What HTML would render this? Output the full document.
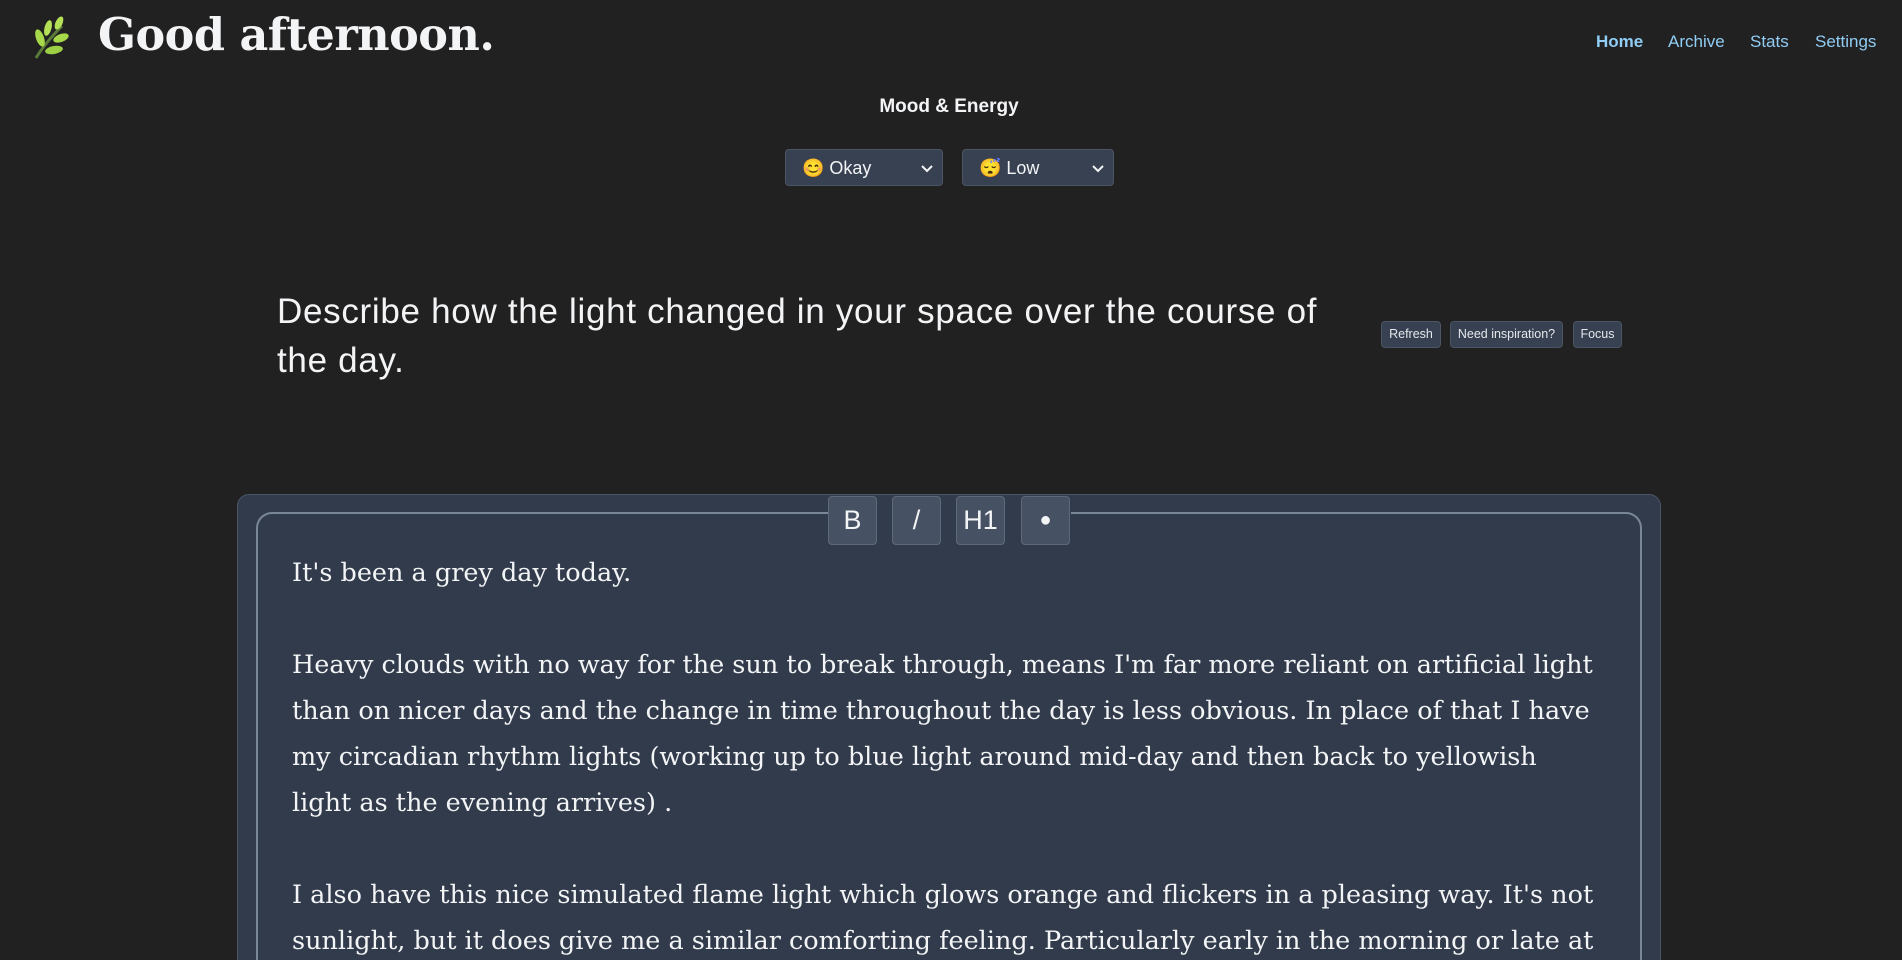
<!DOCTYPE html>
<html><head><meta charset="utf-8"><style>
*{margin:0;padding:0;box-sizing:border-box}
html,body{width:1902px;height:960px;overflow:hidden;background:#212121;color:#f3f4f6;font-family:"Liberation Sans",sans-serif}
#wrap{position:relative;width:1902px;height:960px;overflow:hidden}
.abs{position:absolute}
.title{left:98px;top:9px;font-family:"DejaVu Serif","Liberation Serif",serif;font-weight:bold;font-size:44.5px;color:#f3f4f6;letter-spacing:-0.5px}
.nav{top:32px;font-size:17px;color:#90cdf4}
.sel{top:149px;height:37px;background:#374151;border:1px solid #4b5563;border-radius:4px;font-size:18px;color:#f3f4f6;padding:8px 0 0 16px}
.sel svg{position:absolute;right:8px;top:14px}
.btn{top:321px;height:27px;background:#374151;border:1px solid #4b5563;border-radius:4px;font-size:12.5px;color:#e5e7eb;text-align:center;line-height:25px}
.prompt{left:277px;top:287px;font-size:35px;letter-spacing:0.7px;line-height:49px;color:#f3f4f6}
.outer{left:237px;top:494px;width:1424px;height:466px;background:#313b4b;border:1px solid #4a5566;border-bottom:none;border-radius:12px 12px 0 0}
.inner{left:256px;top:512px;width:1386px;height:448px;border:2px solid #7a8799;border-bottom:none;border-radius:16px 16px 0 0}
.tb{top:496px;width:49px;height:49px;background:#465163;border:1px solid #5d6878;border-radius:4px;font-size:27px;color:#f3f4f6;text-align:center;line-height:47px}
.txt{left:292px;top:550px;height:410px;overflow:hidden;font-family:"DejaVu Serif","Liberation Serif",serif;font-size:25.5px;line-height:46px;color:#f3f4f6;white-space:nowrap}
</style></head><body><div id="wrap">
<svg class="abs" style="left:28px;top:14px" width="46" height="48" viewBox="0 0 46 48">
<path d="M8 44 C14 34 22 24 34 12" stroke="#5a7a3a" stroke-width="3" fill="none"/>
<ellipse cx="12" cy="24" rx="4" ry="9" fill="#a6d84a" transform="rotate(-20 12 24)"/>
<ellipse cx="20" cy="14" rx="3.5" ry="8" fill="#b4e058" transform="rotate(15 20 14)"/>
<ellipse cx="31" cy="9" rx="3.5" ry="7" fill="#b4e058" transform="rotate(25 31 9)"/>
<ellipse cx="33" cy="24" rx="4" ry="8" fill="#a6d84a" transform="rotate(70 33 24)"/>
<ellipse cx="26" cy="36" rx="4" ry="9" fill="#9ccf44" transform="rotate(80 26 36)"/>
</svg>
<div class="abs title">Good afternoon.</div>
<div class="abs nav" style="left:1596px;font-weight:bold">Home</div>
<div class="abs nav" style="left:1668px">Archive</div>
<div class="abs nav" style="left:1750px">Stats</div>
<div class="abs nav" style="left:1815px">Settings</div>
<div class="abs" style="left:0;width:1898px;text-align:center;top:96px;font-size:19px;font-weight:bold">Mood &amp; Energy</div>
<div class="abs sel" style="left:785px;width:158px">😊 Okay<svg width="14" height="10"><path d="M2 2l5 5 5-5" stroke="#f3f4f6" stroke-width="2" fill="none"/></svg></div>
<div class="abs sel" style="left:962px;width:152px">😴 Low<svg width="14" height="10"><path d="M2 2l5 5 5-5" stroke="#f3f4f6" stroke-width="2" fill="none"/></svg></div>
<div class="abs prompt">Describe how the light changed in your space over the course of<br>the day.</div>
<div class="abs btn" style="left:1381px;width:60px">Refresh</div>
<div class="abs btn" style="left:1450px;width:113px">Need inspiration?</div>
<div class="abs btn" style="left:1573px;width:49px">Focus</div>
<div class="abs outer"></div>
<div class="abs inner"></div>
<div class="abs" style="left:828px;top:496px;width:243px;height:50px;background:#313b4b"></div>
<div class="abs tb" style="left:828px">B</div>
<div class="abs tb" style="left:892px">/</div>
<div class="abs tb" style="left:956px">H1</div>
<div class="abs tb" style="left:1021px;font-size:20px">●</div>
<div class="abs txt">It's been a grey day today.<br><br>Heavy clouds with no way for the sun to break through, means I'm far more reliant on artificial light<br>than on nicer days and the change in time throughout the day is less obvious. In place of that I have<br>my circadian rhythm lights (working up to blue light around mid-day and then back to yellowish<br>light as the evening arrives) .<br><br>I also have this nice simulated flame light which glows orange and flickers in a pleasing way. It's not<br>sunlight, but it does give me a similar comforting feeling. Particularly early in the morning or late at</div>
</div></body></html>
